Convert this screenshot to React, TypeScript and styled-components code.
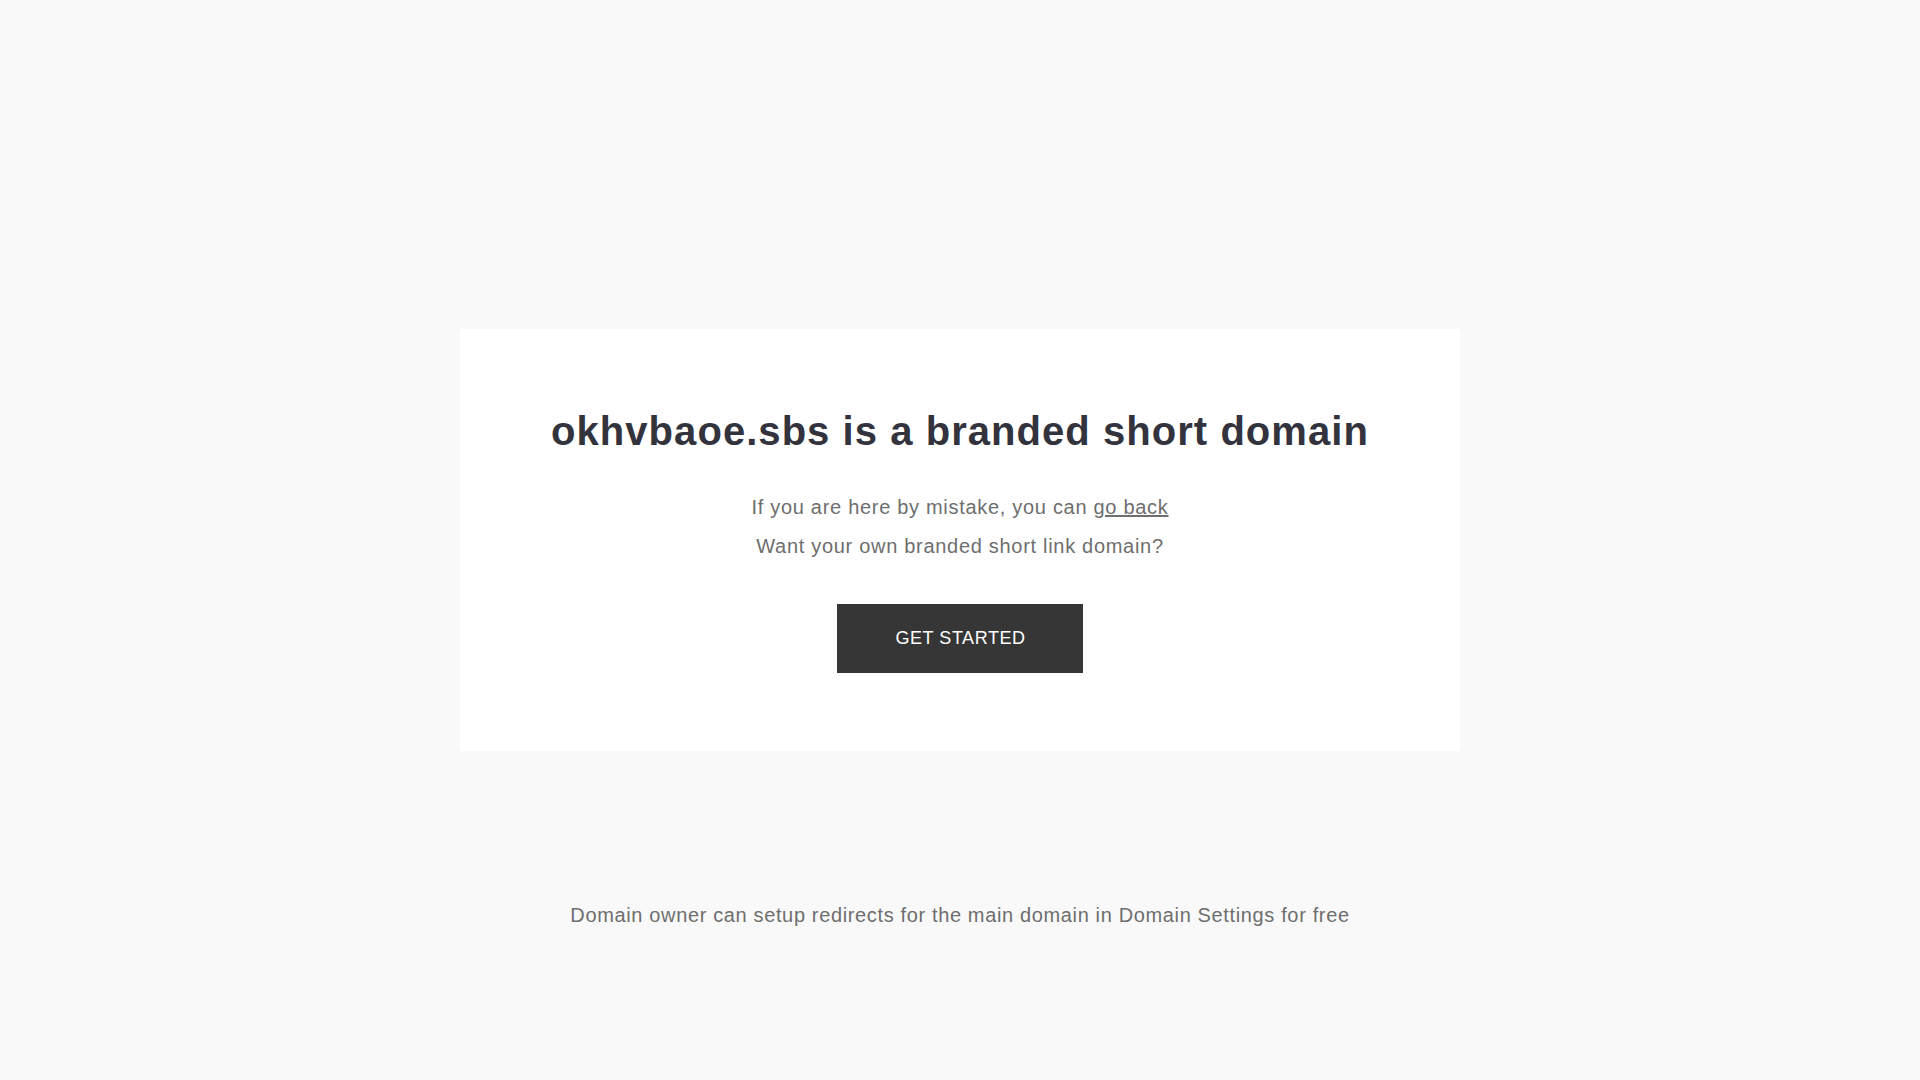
import React from "react";
import styled, { createGlobalStyle } from "styled-components";

const Global = createGlobalStyle`
  html, body { margin: 0; padding: 0; }
  body {
    background: #f9f9f9;
    font-family: "Liberation Sans", Arial, sans-serif;
  }
`;

const Page = styled.div`
  min-height: 100vh;
  display: grid;
  grid-template-rows: 1fr auto 1fr;
  justify-items: center;
`;

const Card = styled.main`
  grid-row: 2;
  width: 1000px;
  box-sizing: border-box;
  background: #ffffff;
  padding: 78px 40px 78px;
  display: flex;
  flex-direction: column;
  align-items: center;
  text-align: center;
`;

const Title = styled.h1`
  margin: 0 0 33px;
  font-size: 40px;
  line-height: 48px;
  font-weight: 700;
  letter-spacing: 1.05px;
  color: #33333d;
`;

const Text = styled.p`
  margin: 0;
  font-size: 20px;
  line-height: 39px;
  letter-spacing: 0.7px;
  color: #6e6e6e;
`;

const Link = styled.a`
  color: #6e6e6e;
  text-decoration: underline;
`;

const Button = styled.a`
  margin-top: 38px;
  display: inline-block;
  height: 69px;
  line-height: 69px;
  padding: 0 57px 0 58px;
  background: #363636;
  color: #ffffff;
  font-size: 18px;
  letter-spacing: 0.55px;
  text-decoration: none;
  text-transform: uppercase;
`;

const Footer = styled.footer`
  grid-row: 3;
  align-self: center;
  font-size: 20px;
  letter-spacing: 0.64px;
  color: #6e6e6e;
`;

export default function App() {
  return (
    <>
      <Global />
      <Page>
        <Card>
          <Title>okhvbaoe.sbs is a branded short domain</Title>
          <Text>
            If you are here by mistake, you can <Link href="#">go back</Link>
          </Text>
          <Text>Want your own branded short link domain?</Text>
          <Button href="#">Get Started</Button>
        </Card>
        <Footer>Domain owner can setup redirects for the main domain in Domain Settings for free</Footer>
      </Page>
    </>
  );
}
